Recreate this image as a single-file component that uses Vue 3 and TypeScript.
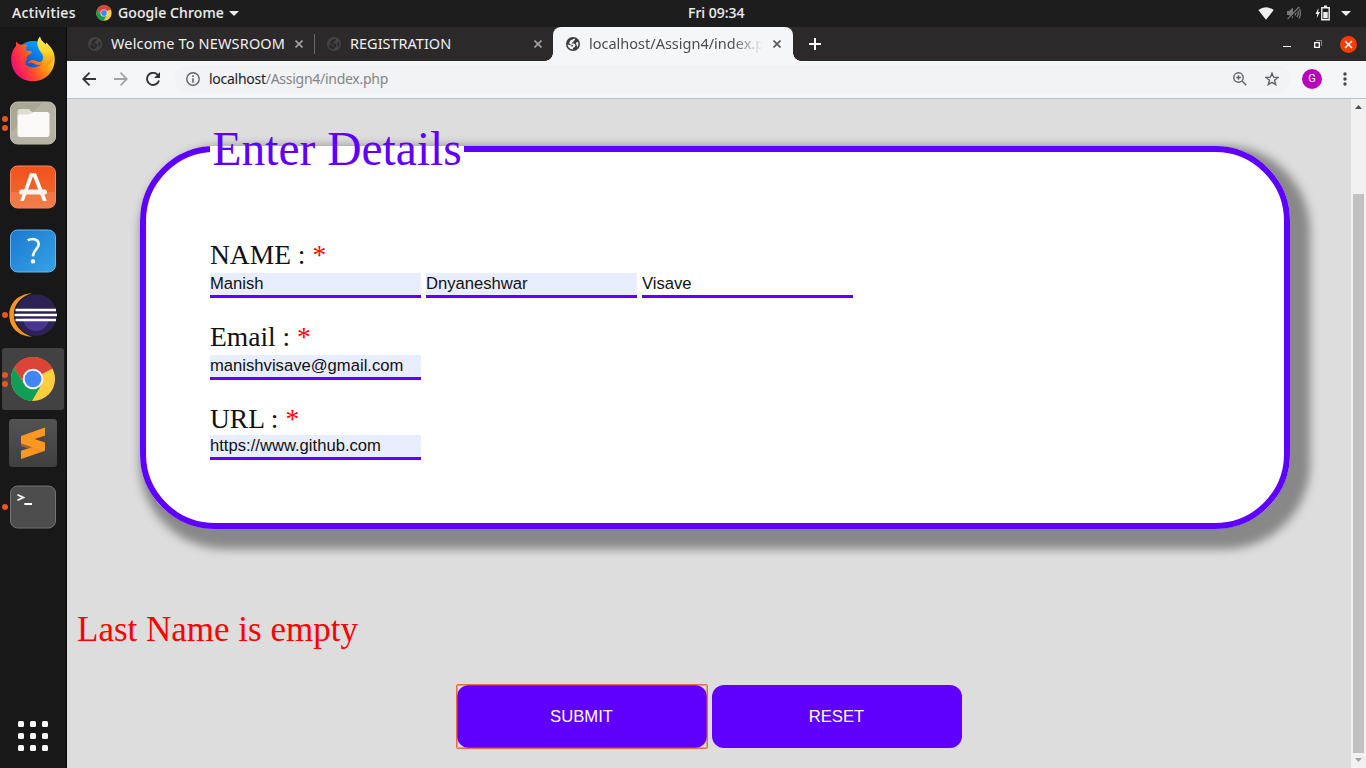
<script setup lang="ts">
import { ref } from 'vue'

interface Tab { title: string; active: boolean; cls: string }
interface Field { label: string; values: { text: string; filled: boolean }[]; tight?: boolean }
interface DockItem { name: string; dots: number; current?: boolean }

const tabs: Tab[] = [
  { title: 'Welcome To NEWSROOM', active: false, cls: 'first' },
  { title: 'REGISTRATION', active: false, cls: 'second' },
  { title: 'localhost/Assign4/index.php', active: true, cls: 'third' },
]
const dock: DockItem[] = [
  { name: 'firefox', dots: 0 },
  { name: 'files', dots: 2 },
  { name: 'software', dots: 0 },
  { name: 'help', dots: 0 },
  { name: 'eclipse', dots: 1 },
  { name: 'chrome', dots: 2, current: true },
  { name: 'sublime', dots: 0 },
  { name: 'terminal', dots: 1 },
]
const fields = ref<Field[]>([
  { label: 'NAME :', values: [{ text: 'Manish', filled: true }, { text: 'Dnyaneshwar', filled: true }, { text: 'Visave', filled: false }] },
  { label: 'Email :', values: [{ text: 'manishvisave@gmail.com', filled: true }] },
  { label: 'URL :', values: [{ text: 'https://www.github.com', filled: true }], tight: true },
])
</script>

<template>
  <div class="desktop">
    <svg class="defs" width="0" height="0">
      <defs>
        <linearGradient id="ffBody" x1="0.1" y1="0.7" x2="0.9" y2="0.3">
          <stop offset="0" stop-color="#f5156c" /><stop offset="0.35" stop-color="#ff4a2e" /><stop offset="0.7" stop-color="#ff980e" /><stop offset="1" stop-color="#ffe226" />
        </linearGradient>
        <linearGradient id="ffTail" x1="0" y1="0" x2="0" y2="1">
          <stop offset="0" stop-color="#fff44f" /><stop offset="0.5" stop-color="#ffd52a" /><stop offset="1" stop-color="#ff8a16" />
        </linearGradient>
        <linearGradient id="ffGlobe" x1="0" y1="1" x2="0.6" y2="0">
          <stop offset="0" stop-color="#0a2f8c" /><stop offset="0.5" stop-color="#0060df" /><stop offset="1" stop-color="#0aa2f8" />
        </linearGradient>
        <linearGradient id="orange" x1="0" y1="0" x2="0" y2="1">
          <stop offset="0" stop-color="#f2511b" /><stop offset="1" stop-color="#ee7036" />
        </linearGradient>
        <linearGradient id="blue" x1="0" y1="0" x2="1" y2="1">
          <stop offset="0" stop-color="#1b78cf" /><stop offset="1" stop-color="#36a3e6" />
        </linearGradient>
        <linearGradient id="grey" x1="0" y1="0" x2="0" y2="1">
          <stop offset="0" stop-color="#535353" /><stop offset="1" stop-color="#3f3f3f" />
        </linearGradient>
        <symbol id="chromeLogo" viewBox="0 0 48 48">
          <circle cx="24" cy="24" r="23" fill="#ffcd40" />
          <path d="M24 24 L4.1 12.5 A23 23 0 0 1 44.3 13 Z" fill="#db4437" />
          <path d="M24 13.5 H44.5 A23 23 0 0 0 4.1 12.5 L15 29 Z" fill="#db4437" />
          <path d="M4.1 12.5 A23 23 0 0 0 23 47 L33 29.5 L24 34.5 L15 29 Z" fill="#0f9d58" />
          <circle cx="24" cy="24" r="10.8" fill="#f4f4f4" /><circle cx="24" cy="24" r="8.7" fill="#4285f4" />
        </symbol>
        <symbol id="globe" viewBox="0 0 14 14">
          <circle cx="7" cy="7" r="7" fill="currentColor" />
          <path class="land" d="M8.6 1.6 L9 3 L7.4 4 L7.6 5.2 L5.8 5.6 L5.6 6.4 L8.2 6.6 L9.6 8 L8.8 10 L7.2 10.8 L6.8 12.5 C4 12.3 1.8 10.2 1.5 7.4 L3.6 8 L5.4 8.4 L5.8 9.8 L7.4 8.9 L6.6 7.9 L4.3 7.4 L3 6 L4.4 3.6 L6.4 2.4 Z M10.9 4.8 L12.3 5.6 C12.7 7.4 12.1 9.4 11 10.6 L10.8 8.4 L10 6.4 Z" />
        </symbol>
      </defs>
    </svg>

    <header class="topbar">
      <span class="activities">Activities</span>
      <svg class="mini-chrome" width="16" height="16"><use href="#chromeLogo" /></svg>
      <span class="appname">Google Chrome</span>
      <svg class="caret" width="10" height="5"><path d="M0 0H10L5 5Z" fill="#eee" /></svg>
      <span class="clock">Fri 09:34</span>
      <div class="status">
        <svg width="16" height="13" viewBox="0 0 16 13"><path d="M0.3 3 Q8 -2.5 15.7 3 L8 12.8Z" fill="#efefef" /></svg>
        <svg width="16" height="14" viewBox="0 0 16 14" fill="none" stroke="#777" stroke-width="1.3"><path d="M1 5H3L7 1.5V12.5L3 9H1Z" fill="#777" stroke="none" /><path d="M9 4.5Q10.5 7 9 9.5M11 2.8Q13.5 7 11 11.2M13 1.5Q16 7 13 12.5" /><path d="M2 14L13.5 2" stroke="#1d1d1d" stroke-width="1.2" /><path d="M1.5 13.2L13 1" stroke-width="1.1" /></svg>
        <svg width="15" height="16" viewBox="0 0 15 16"><path d="M3.5 3L0.5 9H2.3L1.7 13L5 7H3.2Z" fill="#eee" /><path d="M6.8 2.8H14.2V14.8H6.8Z" fill="none" stroke="#eee" stroke-width="1.4" /><path d="M9 0.5H12V2.5H9ZM8.3 7H12.7V13.3H8.3Z" fill="#eee" /></svg>
        <svg width="10" height="5"><path d="M0 0H10L5 5Z" fill="#eee" /></svg>
      </div>
    </header>

    <div class="below">
      <nav class="dock">
        <div v-for="item in dock" :key="item.name" class="slot" :class="{ current: item.current }">
          <span class="dots"><i v-for="n in item.dots" :key="n" /></span>
          <svg v-if="item.name === 'firefox'" width="46" height="46" viewBox="0 0 46 46">
            <circle cx="23" cy="24" r="19" fill="url(#ffGlobe)" />
            <path d="M6 5.5 C8 8 9.5 8.5 12 9 C14 8.3 16 8.4 18 9 C15.8 10.7 15.5 12.5 16.5 14.5 C18.5 15 21 14.7 22 16 C21.8 18 18.5 18.7 17 20 L16.8 23.5 C14.8 25 15 28 17.5 30 C21.5 32.3 28 31.5 31 28.5 C28 29.7 25 27.8 22.5 27 C20 26.3 19 27.8 17.5 27.3 C19 24 22 22.8 26 25 C30 27.5 33 25.5 33 21 C33 16 29 14 28 9 C27.5 5 29 2 30 1 C30.5 5 34 5.5 36.5 9.5 L37.5 8.5 C40 11.5 43.8 17 44.6 22 C45.4 35 36 45.3 23 45.3 C10 45.3 1.2 35.5 1.2 23 C1.2 17 3.2 13 6 10 Z" fill="url(#ffBody)" />
            <path d="M30 0.5 C25 6 28 13 32 17.5 C36 22 34.5 27 31 31 C39 30 44 25.5 44.5 20 C43.5 12.5 38 8.5 36.4 6.5 L35.5 8.8 C32.8 6.3 30.5 4 30 0.5Z" fill="url(#ffTail)" />
          </svg>
          <svg v-else-if="item.name === 'files'" width="48" height="44" viewBox="0 0 48 44">
            <rect x="1.5" y="1" width="45" height="42" rx="7" fill="#aaa795" stroke="#c5c1b0" />
            <path d="M2 31 L34 1.5 H40 Q46 1.5 46 8 V36 Q46 42.5 40 42.5 H8 Q2 42.5 2 36Z" fill="#b7b3a2" />
            <path d="M8.5 18 V10.5 Q8.5 8 11 8 H20 L24 12 V18Z" fill="#dedbd1" />
            <path d="M8.5 15.5 Q8.5 13.5 10.5 13.5 H20 L24.5 11 H38 Q40.5 11 40.5 13.5 V33 Q40.5 36 38 36 H11 Q8.5 36 8.5 33Z" fill="#faf9f7" />
          </svg>
          <svg v-else-if="item.name === 'software'" width="48" height="44" viewBox="0 0 48 44">
            <rect x="1.5" y="1" width="45" height="42" rx="7" fill="url(#orange)" stroke="#fa8b59" />
            <path d="M2 27H46V36Q46 42.5 40 42.5H8Q2 42.5 2 36Z" fill="#f18a59" opacity=".5" />
            <path d="M21 8.3H27L37.8 36H33.8L24 11.2L14.8 36H11.2Z" fill="#fff" />
            <rect x="10" y="24.4" width="28" height="5" rx="2.5" fill="#fff1eb" />
          </svg>
          <svg v-else-if="item.name === 'help'" width="48" height="44" viewBox="0 0 48 44">
            <rect x="1.5" y="1" width="45" height="42" rx="7" fill="url(#blue)" stroke="#62b9ef" />
            <path d="M18.8 11.4 C23.5 8.8 30.2 10 29.6 15.8 C29.2 20.3 24.2 20.3 24 27.4" fill="none" stroke="#fff" stroke-width="2.6" /><circle cx="24" cy="32.4" r="2.2" fill="#fff" />
          </svg>
          <svg v-else-if="item.name === 'eclipse'" width="48" height="44" viewBox="0 0 48 44">
            <path d="M23 0.3 C8 1 0.3 11 0.3 22 C0.3 34 9 43.3 23 43.7 C11 40 4.8 31 4.8 22 C4.8 12 11 4 23 0.3Z" fill="#f79422" />
            <circle cx="27" cy="22" r="20.8" fill="#2c2255" /><path d="M14 25 A13 13 0 0 0 40 25Z" fill="#47368b" />
            <path d="M6.5 15.8H47V18.2H6.5ZM5.5 20.8H48V23.2H5.5ZM6.5 25.8H47V28.2H6.5Z" fill="#fff" />
          </svg>
          <svg v-else-if="item.name === 'chrome'" width="46" height="46"><use href="#chromeLogo" /></svg>
          <svg v-else-if="item.name === 'sublime'" width="48" height="48" viewBox="0 0 48 48">
            <rect width="48" height="48" rx="3.5" fill="url(#grey)" />
            <path d="M12 17L36 8.4V16.4L25.5 20L36 23.4V31.8L12 40V31.8L23 28.3L12 24.6Z" fill="#ff9822" />
            <path d="M23 28.3L36 31.8L31 33.4L12 27V24.6Z" fill="#ec8a1e" opacity=".5" />
          </svg>
          <svg v-else width="48" height="44" viewBox="0 0 48 44">
            <rect x="1.5" y="1" width="45" height="42" rx="7" fill="#4d4d4d" stroke="#737373" />
            <path d="M8.5 9.8L14.3 12.5L8.5 15.2M15.3 19H23" fill="none" stroke="#fff" stroke-width="1.8" />
          </svg>
        </div>
        <div class="apps"><i v-for="n in 9" :key="n" /></div>
      </nav>

      <main class="window">
        <div class="tabstrip">
          <div v-for="tab in tabs" :key="tab.title" class="tab" :class="[tab.cls, { active: tab.active }]">
            <svg class="favicon" width="14" height="14"><use href="#globe" /></svg>
            <span class="title">{{ tab.title }}</span>
            <svg class="close" width="8" height="8" viewBox="0 0 8 8"><path d="M.5 .5L7.5 7.5M7.5 .5L.5 7.5" stroke="currentColor" stroke-width="1.6" /></svg>
          </div>
          <svg class="plus" width="12" height="12"><path d="M6 0V12M0 6H12" stroke="#fff" stroke-width="2" /></svg>
          <div class="controls">
            <svg width="8" height="8"><path d="M0 6.5H8" stroke="#fff" /></svg>
            <svg width="8" height="8" fill="none"><path d="M2 .5H7.5V6" stroke="#888" /><path d="M.7 2.7H5.3V7.3H.7Z" stroke="#fff" stroke-width="1.3" /></svg>
            <svg width="17" height="17"><circle cx="8.5" cy="8.5" r="8.5" fill="#f63b05" /><path d="M5 5L12 12M12 5L5 12" stroke="#fff" stroke-width="1.5" /></svg>
          </div>
        </div>

        <div class="toolbar">
          <svg class="back" width="14" height="14" viewBox="0 0 14 14" fill="none" stroke="#333639" stroke-width="1.8"><path d="M14 7H1.5M7.5 .7L1.2 7L7.5 13.3" /></svg>
          <svg class="fwd" width="14" height="14" viewBox="0 0 14 14" fill="none" stroke="#a1a4a7" stroke-width="1.8"><path d="M0 7H12.5M6.5 .7L12.8 7L6.5 13.3" /></svg>
          <svg class="reload" width="14" height="14" viewBox="0 0 14 14"><path d="M12 3.2A6.1 6.1 0 1 0 13 8.5" fill="none" stroke="#333639" stroke-width="1.9" /><path d="M14 0V6H8Z" fill="#333639" /></svg>
          <div class="omnibox">
            <svg width="14" height="14" viewBox="0 0 14 14"><circle cx="7" cy="7" r="6.2" fill="none" stroke="#5f6368" stroke-width="1.4" /><path d="M6.2 3.3H7.8V4.9H6.2ZM6.2 6.2H7.8V10.7H6.2Z" fill="#5f6368" /></svg>
            <span class="url"><b>localhost</b>/Assign4/index.php</span>
            <svg width="14" height="14" viewBox="0 0 14 14" fill="none" stroke="#5f6368" stroke-width="1.4"><circle cx="5.5" cy="5.5" r="4.7" /><path d="M9 9L13.3 13.3M5.5 3.2V7.8M3.2 5.5H7.8" /></svg>
            <svg width="14" height="14" viewBox="0 0 14 14" fill="none" stroke="#5f6368" stroke-width="1.4"><path d="M7 1.2L8.6 5.2L13 5.5L9.6 8.3L10.7 12.6L7 10.3L3.3 12.6L4.4 8.3L1 5.5L5.4 5.2Z" /></svg>
          </div>
          <span class="avatar">G</span>
          <svg class="dots3" width="4" height="14" fill="#45484b"><circle cx="2" cy="2" r="1.7" /><circle cx="2" cy="7" r="1.7" /><circle cx="2" cy="12" r="1.7" /></svg>
        </div>

        <div class="viewport">
          <form class="page" @submit.prevent>
            <fieldset>
              <legend>Enter Details</legend>
              <div v-for="f in fields" :key="f.label" class="field" :class="{ tight: f.tight }">
                <label>{{ f.label }} <span>*</span></label>
                <div class="inputs">
                  <input v-for="(v, i) in f.values" :key="i" v-model="v.text" type="text" :class="{ filled: v.filled }" />
                </div>
              </div>
            </fieldset>
            <p class="error">Last Name is empty</p>
            <div class="buttons">
              <button class="focused" type="submit">SUBMIT</button>
              <button type="reset">RESET</button>
            </div>
          </form>
          <div class="scrollbar">
            <svg width="7" height="4"><path d="M0 4L3.5 0L7 4Z" fill="#505050" /></svg>
            <i class="thumb" />
            <svg width="7" height="4"><path d="M0 0L3.5 4L7 0Z" fill="#a3a3a3" /></svg>
          </div>
        </div>
      </main>
    </div>
  </div>
</template>

<style>
html, body { margin: 0; overflow: hidden; }
</style>

<style scoped>
* { box-sizing: border-box; }
svg { display: block; flex: none; }
.defs { position: absolute; }
.desktop { width: 1366px; height: 768px; display: flex; flex-direction: column; overflow: hidden; font-family: "Noto Sans", "Open Sans", sans-serif; }

.topbar { position: relative; height: 27px; flex: none; display: flex; align-items: center; padding: 0 15px 1px 12px; background: #1d1d1d; color: #ececec; font-size: 14px; font-weight: 500; }
.activities { width: 84px; letter-spacing: .35px; }
.appname { width: 107px; margin-left: 6px; white-space: nowrap; letter-spacing: .1px; }
.activities, .appname, .clock { padding-bottom: 1px; -webkit-text-stroke: .1px; }
.caret { margin-left: 4px; }
.clock { position: absolute; left: 688px; white-space: nowrap; }
.status { display: flex; align-items: center; margin: 0 0 0 auto; }
.status svg:nth-child(2) { margin-left: 12px; }
.status svg:nth-child(3) { margin-left: 13px; }
.status svg:nth-child(4) { margin-left: 11px; }

.below { flex: 1; display: flex; min-height: 0; }
.dock { width: 67px; flex: none; display: flex; flex-direction: column; background: #181818; border-right: 1px solid #090909; }
.slot { position: relative; width: 62px; height: 62px; margin: 1px 0 1px 2px; display: flex; align-items: center; justify-content: center; border-radius: 3px; flex: none; }
.slot.current { background: #424242; }
.dots { position: absolute; left: 0; top: 0; height: 62px; display: flex; flex-direction: column; justify-content: center; gap: 3px; }
.dots i { width: 6px; height: 6px; border-radius: 50%; background: #e95420; }
.apps { display: grid; grid-template-columns: repeat(3, 6px); gap: 6px; margin: auto 0 17px 18px; }
.apps i { height: 6px; border-radius: 1.5px; background: #f7f7f7; }

.window { flex: 1; display: flex; flex-direction: column; min-width: 0; }
.tabstrip { height: 34px; flex: none; display: flex; align-items: center; background: #2c292a; }
.tab { position: relative; height: 34px; display: flex; align-items: center; color: #f0f0f0; font-size: 14.5px; }
.land { fill: var(--land); }
.favicon { color: #444; --land: #2c292a; }
.tab.first { width: 248px; padding-left: 21px; border-right: 1px solid #67686a; height: 20px; }
.tab.first .title { letter-spacing: .15px; }
.tab.second { width: 238px; padding-left: 12px; }
.tab.third { width: 240px; padding-left: 13px; }
.title { margin-left: 9px; width: 174px; line-height: 20px; padding-bottom: 2px; white-space: nowrap; overflow: hidden; }
.close { margin-left: 10px; color: #a3a3a3; }
.tab.active { background: #f5f6f7; color: #4b4c4e; border-radius: 8px 8px 0 0; }
.tab.active .favicon { color: #3a3b3d; --land: #f5f6f7; }
.tab.active .close { color: #55585b; }
.tab.active .title { -webkit-mask-image: linear-gradient(90deg, #000 82%, transparent 100%); mask-image: linear-gradient(90deg, #000 82%, transparent 100%); }
.tab.active::before, .tab.active::after { content: ''; position: absolute; bottom: 0; width: 8px; height: 8px; }
.tab.active::before { left: -8px; background: radial-gradient(circle at 0 0, transparent 7.5px, #f5f6f7 8px); }
.tab.active::after { right: -8px; background: radial-gradient(circle at 100% 0, transparent 7.5px, #f5f6f7 8px); }
.plus { margin-left: 16px; }
.controls { margin-left: auto; display: flex; align-items: center; padding-right: 9.5px; }
.controls svg:nth-child(2) { margin-left: 23px; }
.controls svg:nth-child(3) { margin-left: 18px; }

.toolbar { height: 38px; flex: none; display: flex; align-items: center; background: #f5f6f7; border-bottom: 1px solid #b9c0c7; padding-bottom: 1px; }
.back { margin-left: 15px; }
.fwd, .reload { margin-left: 18px; }
.omnibox { width: 1115px; height: 28px; margin-left: 15px; border-radius: 14px; background: #f1f3f4; display: flex; align-items: center; padding: 0 11px; }
.url { margin-left: 9px; margin-right: auto; padding-bottom: 2px; color: #80868b; font-size: 14px; letter-spacing: -.27px; }
.url b { font-weight: 400; color: #202124; }
.omnibox svg:last-child { margin-left: 18px; }
.avatar { width: 20px; height: 20px; margin-left: 12px; border-radius: 50%; background: #bb00bb; color: #fff; font: 11px/20px Roboto, sans-serif; text-align: center; }
.dots3 { margin-left: 20.5px; }

.viewport { flex: 1; min-height: 0; display: flex; }
.page { width: 1284px; background: #ddd; padding-top: 22px; font-family: "Liberation Serif", serif; }
fieldset { width: 1150px; height: 408px; margin: 0 0 0 73px; padding: 63px 64px 0; border: 6px solid #5f00ff; border-radius: 75px; background: #fff; box-shadow: 10px 10px 10px 10px #888; }
legend { padding: 0 2.5px; color: #5f00ff; font-size: 47.5px; line-height: 56px; }
.field { margin-bottom: 24px; }
label { display: block; height: 33px; line-height: 29px; font-size: 27.5px; color: #111; white-space: nowrap; }
label span { color: #f00; }
.tight label { height: 31px; }
.inputs { display: flex; gap: 5px; }
input { width: 211px; height: 25px; padding: 0 0 1px; border: 0; border-bottom: 3px solid #5f00ff; border-radius: 0; outline: 0; background: #fff; font: 16.64px "Liberation Sans", Arial, sans-serif; color: #111; }
input.filled { background: #e8eefe; }
.error { margin: 81px 0 0 10px; font-size: 35px; line-height: 40px; color: #f00; }
.buttons { display: flex; gap: 5px; margin: 35px 0 0 390px; }
button { position: relative; width: 250px; height: 63px; padding: 0 1px 0 0; border: 0; border-radius: 12px; background: #5f00ff; color: #fff; font: 16.667px "Liberation Sans", Arial, sans-serif; }
button.focused::after { content: ''; position: absolute; inset: -1px; border: 1.5px solid #ed6a43; border-radius: 2px; box-shadow: inset 0 0 0 1px rgba(233, 84, 32, .45); }
.scrollbar { width: 15px; background: #f1f1f1; display: flex; flex-direction: column; align-items: center; padding: 6px 0; }
.thumb { width: 11px; height: 559px; margin: auto 0 5px; background: #c1c1c1; }
</style>
